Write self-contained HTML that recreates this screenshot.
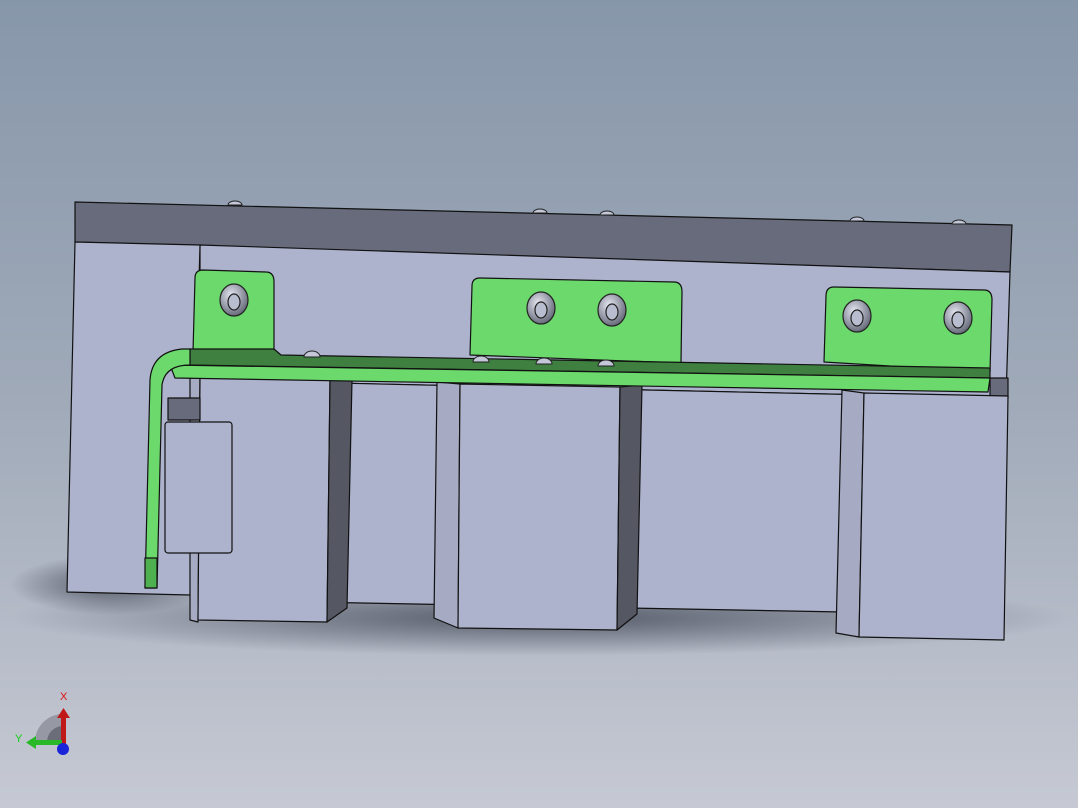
<!DOCTYPE html>
<html><head><meta charset="utf-8"><style>
html,body{margin:0;padding:0;width:1078px;height:808px;overflow:hidden}
</style></head><body>
<svg width="1078" height="808" viewBox="0 0 1078 808" xmlns="http://www.w3.org/2000/svg">
<defs>
<linearGradient id="bg" x1="0" y1="0" x2="0" y2="1">
<stop offset="0" stop-color="#8797aa"/><stop offset="0.5" stop-color="#a0aab9"/><stop offset="1" stop-color="#c6c9d3"/></linearGradient>
<radialGradient id="sh" cx="0.5" cy="0.5" r="0.5"><stop offset="0" stop-color="#3d4250" stop-opacity="0.8"/><stop offset="1" stop-color="#3d4250" stop-opacity="0"/></radialGradient>
<radialGradient id="scr" cx="0.4" cy="0.35" r="0.7"><stop offset="0" stop-color="#e6e8f2"/><stop offset="1" stop-color="#5e6272"/></radialGradient>
</defs>
<rect width="1078" height="808" fill="url(#bg)"/>
<ellipse cx="540" cy="618" rx="530" ry="38" fill="url(#sh)"/>
<ellipse cx="110" cy="585" rx="100" ry="30" fill="url(#sh)"/>
<g stroke="#111" stroke-width="1.2" stroke-linejoin="round">
<polygon points="75,202 1012,225 1010,272 75,242" fill="#676b7b"/>
<polygon points="200,245 1010,272 1006,398 200,380" fill="#adb3cd"/>
<polygon points="200,380 1006,398 1004,615 200,600" fill="#adb3cd"/>
<polygon points="75,242 200,245 190,595 67,592" fill="#adb3cd"/>
<polygon points="990,378 1008,378 1008,398 990,397" fill="#676b7b"/>
<polygon points="190,378 200,378 198,622 190,620" fill="#a6abc3"/>
<polygon points="200,378 330,380 327,622 198,620" fill="#adb3cd"/>
<polygon points="330,380 352,380 347,608 327,622" fill="#555763"/>
<polygon points="437,382 460,384 458,628 434,618" fill="#a6abc3"/>
<polygon points="460,384 620,387 617,630 458,628" fill="#adb3cd"/>
<polygon points="620,387 642,385 637,614 617,630" fill="#555763"/>
<polygon points="842,390 864,393 859,637 836,633" fill="#a6abc3"/>
<polygon points="864,393 1008,396 1004,640 859,637" fill="#adb3cd"/>
<polygon points="168,398 200,398 200,420 168,420" fill="#676b7b"/>
<rect x="165" y="422" width="67" height="131" rx="3" fill="#adb3cd"/>
<path d="M193,352 L195,278 Q195,270 203,270 L266,272 Q274,272 274,282 L274,354 Z" fill="#6cd96c"/>
<path d="M470,355 L472,286 Q472,278 480,278 L674,282 Q682,282 682,292 L681,363 Z" fill="#6cd96c"/>
<path d="M824,362 L826,296 Q826,287 834,287 L984,290 Q992,290 992,300 L990,372 Z" fill="#6cd96c"/>
<polygon points="190,349 274,349 281,355 990,368 990,378 190,365" fill="#3f8040"/>
<polygon points="170,365 990,378 988,392 175,378" fill="#6cd96c"/>
<path d="M190,349 L190,365 Q165,365 162,385 L157,588 L145,588 L150,380 Q152,352 182,349 Z" fill="#6cd96c"/>
<rect x="145" y="558" width="12" height="30" fill="#4fb050"/>
</g>
<g stroke="#222" stroke-width="1.2">
<ellipse cx="234" cy="300" rx="14" ry="16" fill="url(#scr)"/><ellipse cx="234" cy="302" rx="6" ry="8" fill="#b9bdd0"/>
<ellipse cx="541" cy="308" rx="14" ry="16" fill="url(#scr)"/><ellipse cx="541" cy="310" rx="6" ry="8" fill="#b9bdd0"/>
<ellipse cx="612" cy="310" rx="14" ry="16" fill="url(#scr)"/><ellipse cx="612" cy="312" rx="6" ry="8" fill="#b9bdd0"/>
<ellipse cx="857" cy="316" rx="14" ry="16" fill="url(#scr)"/><ellipse cx="857" cy="318" rx="6" ry="8" fill="#b9bdd0"/>
<ellipse cx="958" cy="318" rx="14" ry="16" fill="url(#scr)"/><ellipse cx="958" cy="320" rx="6" ry="8" fill="#b9bdd0"/>
</g>
<g stroke="#222" stroke-width="1" fill="#c3c7d8">
<path d="M304,357 A8,6 0 0 1 320,357 Z"/>
<path d="M473,362 A8,6 0 0 1 489,362 Z"/>
<path d="M536,364 A8,6 0 0 1 552,364 Z"/>
<path d="M598,366 A8,6 0 0 1 614,366 Z"/>
<path d="M228,205 A7,4 0 0 1 242,205 Z"/>
<path d="M533,213 A7,4 0 0 1 547,213 Z"/>
<path d="M600,215 A7,4 0 0 1 614,215 Z"/>
<path d="M850,221 A7,4 0 0 1 864,221 Z"/>
<path d="M952,224 A7,4 0 0 1 966,224 Z"/>
</g>
<path d="M35,742 A28,28 0 0 1 63,714 L63,742 Z" fill="#8c8f98" opacity="0.8"/>
<path d="M47,742 A16,16 0 0 1 63,726 L63,742 Z" fill="#6b6e78"/>
<rect x="61" y="716" width="5" height="28" fill="#c01818"/>
<polygon points="57,718 63.5,708 70,718" fill="#c01818"/>
<rect x="34" y="740" width="28" height="5" fill="#28b828"/>
<polygon points="36,736 26,742.5 36,749" fill="#28b828"/>
<circle cx="63" cy="749" r="6" fill="#1a24d8"/>
<text x="60" y="700" font-family="Liberation Sans, sans-serif" font-size="11" fill="#e01010">X</text>
<text x="15" y="742" font-family="Liberation Sans, sans-serif" font-size="11" fill="#10d010">Y</text>
</svg>
</body></html>
